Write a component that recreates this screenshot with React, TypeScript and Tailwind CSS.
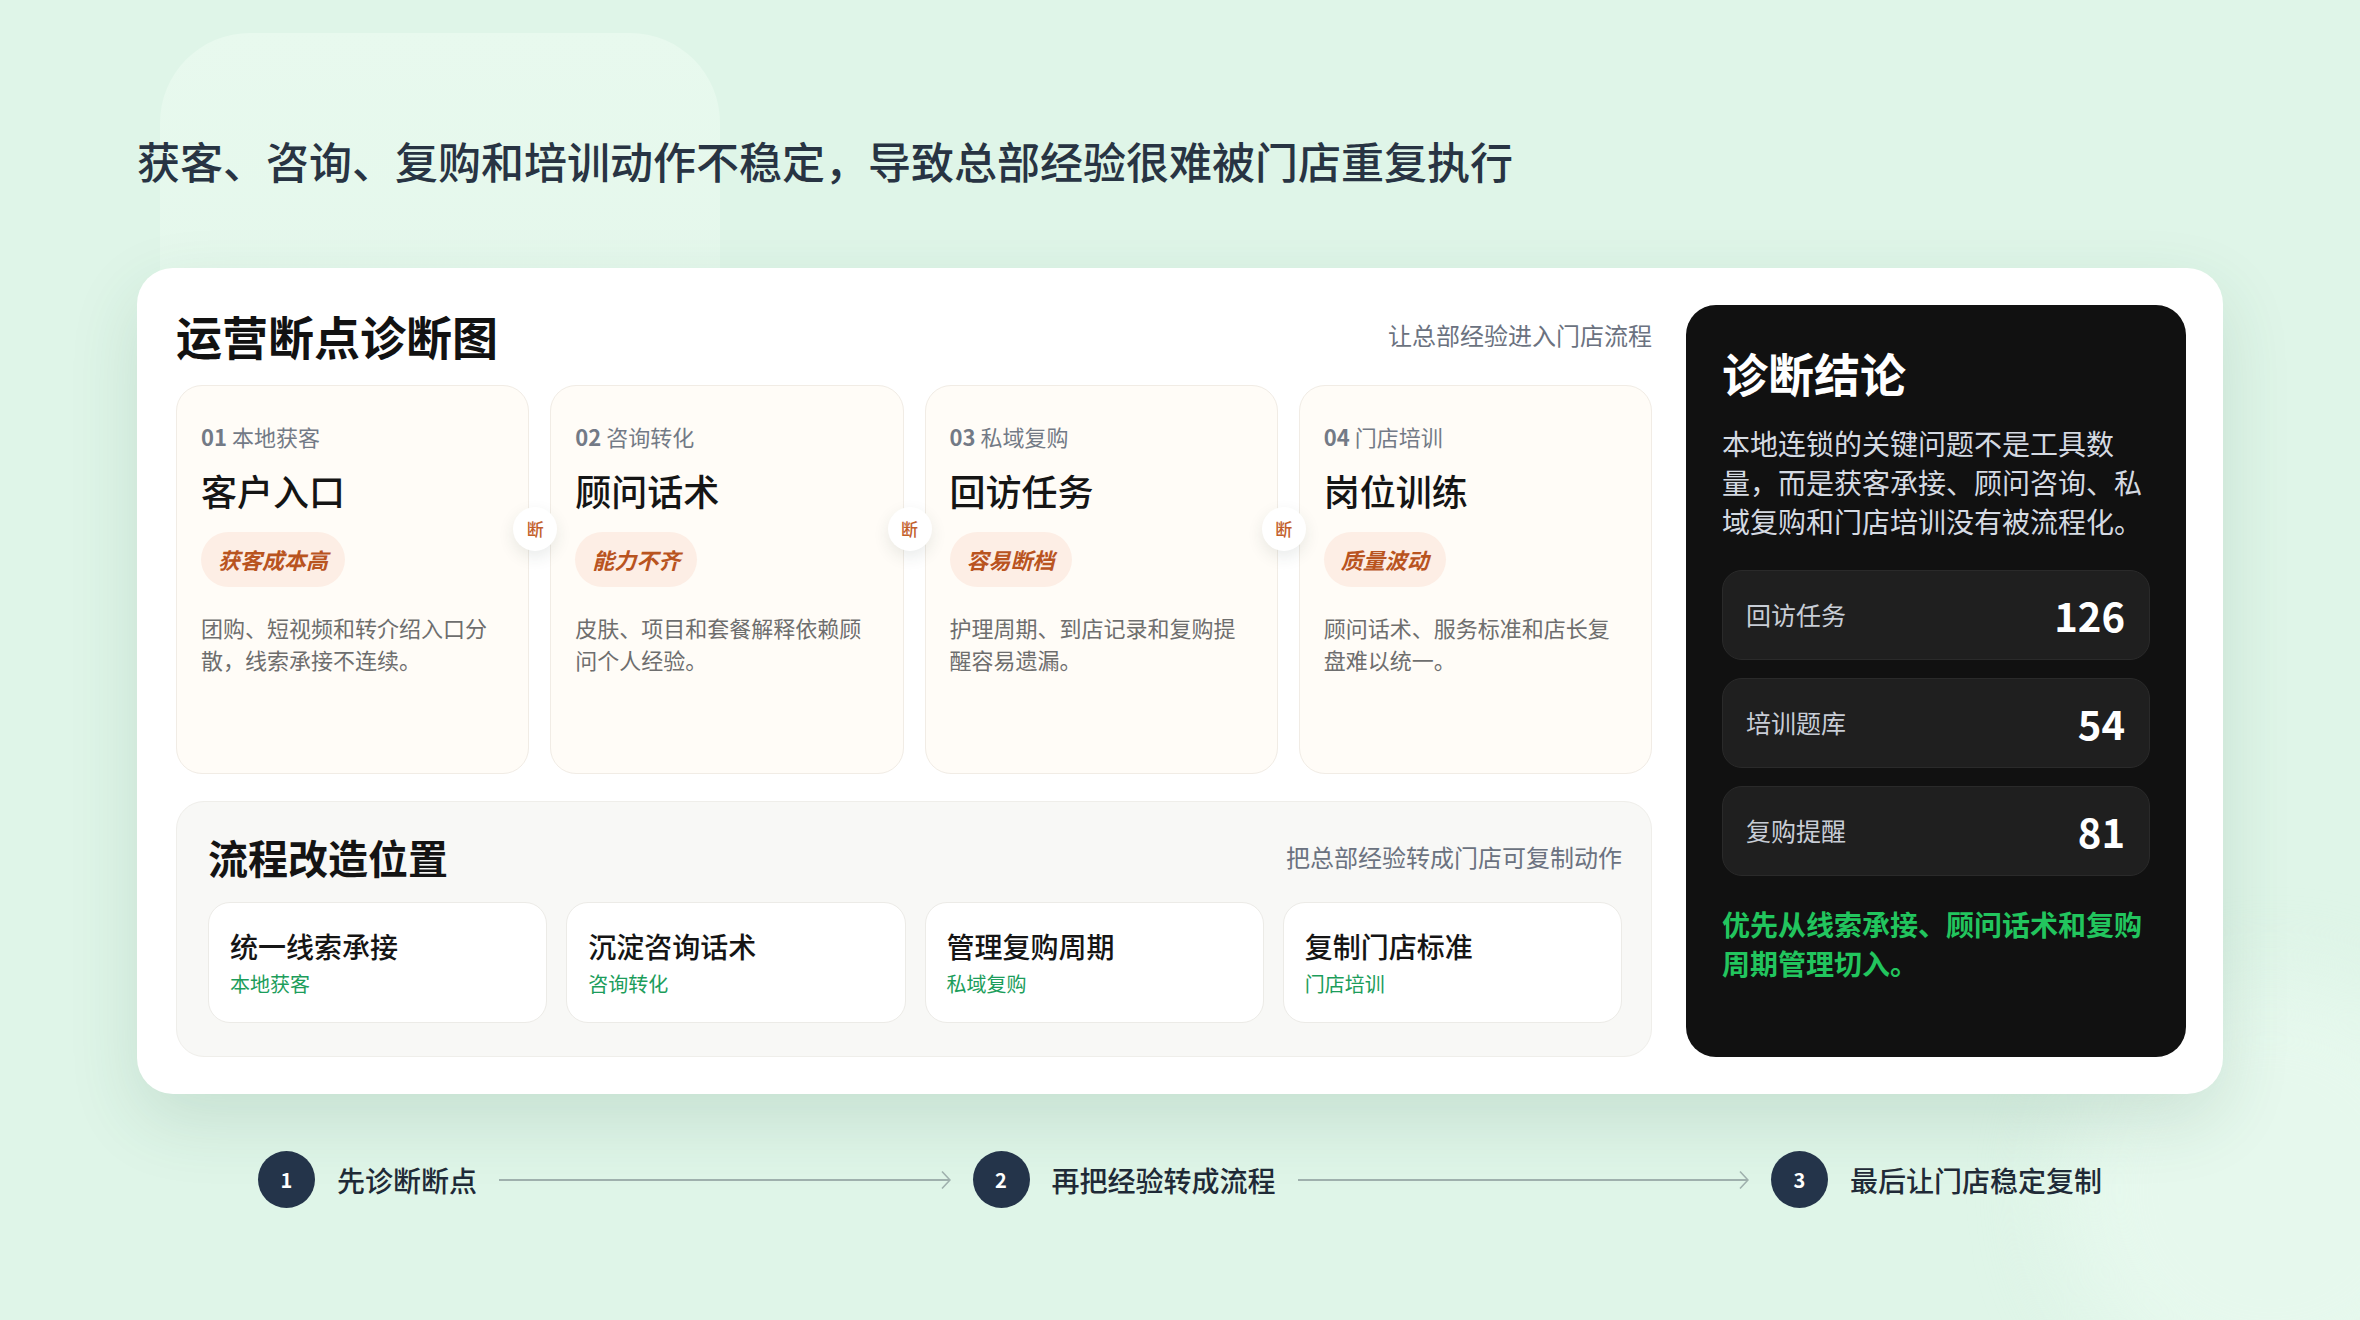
import React from "react";

const breakpoints = [
  {
    no: "01",
    area: "本地获客",
    title: "客户入口",
    tag: "获客成本高",
    desc: "团购、短视频和转介绍入口分散，线索承接不连续。",
  },
  {
    no: "02",
    area: "咨询转化",
    title: "顾问话术",
    tag: "能力不齐",
    desc: "皮肤、项目和套餐解释依赖顾问个人经验。",
  },
  {
    no: "03",
    area: "私域复购",
    title: "回访任务",
    tag: "容易断档",
    desc: "护理周期、到店记录和复购提醒容易遗漏。",
  },
  {
    no: "04",
    area: "门店培训",
    title: "岗位训练",
    tag: "质量波动",
    desc: "顾问话术、服务标准和店长复盘难以统一。",
  },
];

const fixes = [
  { title: "统一线索承接", area: "本地获客" },
  { title: "沉淀咨询话术", area: "咨询转化" },
  { title: "管理复购周期", area: "私域复购" },
  { title: "复制门店标准", area: "门店培训" },
];

const stats = [
  { label: "回访任务", value: "126" },
  { label: "培训题库", value: "54" },
  { label: "复购提醒", value: "81" },
];

const steps = ["先诊断断点", "再把经验转成流程", "最后让门店稳定复制"];

function BreakCard({ item, last }: { item: (typeof breakpoints)[number]; last: boolean }) {
  return (
    <div className="relative flex h-[389px] flex-col rounded-[26px] border border-[#f1ece5] bg-[#fffcf7] px-[24px] pt-[34px]">
      <div className="text-[22px] leading-[32px] text-[#737a86]">
        <span className="font-semibold">{item.no}</span> {item.area}
      </div>
      <div className="mt-[15px] text-[36px] font-medium leading-[46px] text-[#151515]">
        {item.title}
      </div>
      <div className="mt-[19px] flex h-[55px] w-fit items-center rounded-full bg-[#fdeee5] px-[17px] text-[22px] font-semibold italic text-[#b9541f]">
        {item.tag}
      </div>
      <p className="mt-[24px] text-[22px] leading-[32px] text-[#6e6e6e]">{item.desc}</p>
      {!last && (
        <div className="absolute -right-[29px] top-[121px] z-10 flex h-[44px] w-[44px] items-center justify-center rounded-full bg-white text-[17px] font-medium text-[#c2602a] shadow-[0_6px_16px_rgba(40,60,50,0.10)]">
          断
        </div>
      )}
    </div>
  );
}

function Connector() {
  return (
    <div className="flex flex-1 items-center">
      <div className="h-[2px] flex-1 bg-[#9fb0ad]" />
      <svg width="10" height="20" viewBox="0 0 10 20" className="-ml-[9px]">
        <path d="M1 1.5 L9 10 L1 18.5" fill="none" stroke="#9fb0ad" strokeWidth="1.6" />
      </svg>
    </div>
  );
}

export default function App() {
  return (
    <div className="relative min-h-screen w-full overflow-hidden bg-[#dff5e8] font-['Noto_Sans_CJK_SC','Noto_Sans',sans-serif]">
      <div className="pointer-events-none absolute left-[160px] top-[33px] h-[700px] w-[560px] rounded-[90px] bg-gradient-to-b from-[#e8f9ee] to-[#dff5e8]/0" />
      <div className="pointer-events-none absolute -right-[120px] top-[980px] h-[420px] w-[420px] rounded-full bg-[#e6f8ed] blur-[40px]" />

      <div className="relative px-[137px] pt-[130px]">
        <h1 className="text-[43px] font-medium leading-[60px] text-[#283443]">
          获客、咨询、复购和培训动作不稳定，导致总部经验很难被门店重复执行
        </h1>

        <div className="mt-[78px] flex gap-[34px] rounded-[36px] bg-white p-[37px] pl-[39px] shadow-[0_26px_70px_rgba(40,100,70,0.14)]">
          <div className="flex flex-1 flex-col">
            <div className="flex h-[60px] items-center justify-between">
              <h2 className="text-[46px] font-semibold leading-[60px] text-[#121212]">运营断点诊断图</h2>
              <span className="text-[24px] text-[#6b7280]">让总部经验进入门店流程</span>
            </div>

            <div className="mt-[20px] grid grid-cols-4 gap-[21px]">
              {breakpoints.map((item, i) => (
                <BreakCard key={item.no} item={item} last={i === breakpoints.length - 1} />
              ))}
            </div>

            <div className="mt-[27px] rounded-[28px] border border-[#efeeea] bg-[#f8f8f6] pb-[33px] pl-[31px] pr-[29px] pt-[29px]">
              <div className="flex h-[52px] items-center justify-between">
                <h3 className="text-[40px] font-semibold leading-[52px] text-[#141414]">流程改造位置</h3>
                <span className="text-[24px] text-[#6b7280]">把总部经验转成门店可复制动作</span>
              </div>
              <div className="mt-[19px] grid grid-cols-4 gap-[19px]">
                {fixes.map((f) => (
                  <div
                    key={f.title}
                    className="flex h-[121px] flex-col justify-center rounded-[22px] border border-[#ecebe7] bg-white px-[21px]"
                  >
                    <div className="text-[28px] font-medium leading-[39px] text-[#151515]">{f.title}</div>
                    <div className="mt-[3px] text-[20px] leading-[30px] text-[#1c9d5b]">{f.area}</div>
                  </div>
                ))}
              </div>
            </div>
          </div>

          <div className="flex w-[500px] shrink-0 flex-col rounded-[30px] bg-[#111111] px-[36px] pt-[37px]">
            <h2 className="text-[46px] font-bold leading-[60px] text-white">诊断结论</h2>
            <p className="mt-[22px] text-[28px] leading-[39px] text-[#d5dae2]">
              本地连锁的关键问题不是工具数量，而是获客承接、顾问咨询、私域复购和门店培训没有被流程化。
            </p>
            <div className="mt-[29px] flex flex-col gap-[18px]">
              {stats.map((s) => (
                <div
                  key={s.label}
                  className="flex h-[90px] items-center justify-between rounded-[20px] border border-[#2a2a2a] bg-[#1f1f1f] pl-[23px] pr-[24px]"
                >
                  <span className="text-[25px] text-[#c8cdd6]">{s.label}</span>
                  <span className="text-[40px] font-bold leading-none text-white">{s.value}</span>
                </div>
              ))}
            </div>
            <p className="mt-[29px] text-[28px] font-bold leading-[39px] text-[#22c55e]">
              优先从线索承接、顾问话术和复购周期管理切入。
            </p>
          </div>
        </div>

        <div className="mt-[57px] flex items-center gap-[22px] px-[121px]">
          {steps.map((s, i) => (
            <React.Fragment key={s}>
              <div className="flex h-[57px] w-[57px] shrink-0 items-center justify-center rounded-full bg-[#24344a] text-[20px] font-bold text-white">
                {i + 1}
              </div>
              <span className="text-[28px] font-medium text-[#1f2a37]">{s}</span>
              {i < steps.length - 1 && <Connector />}
            </React.Fragment>
          ))}
        </div>
      </div>
    </div>
  );
}
